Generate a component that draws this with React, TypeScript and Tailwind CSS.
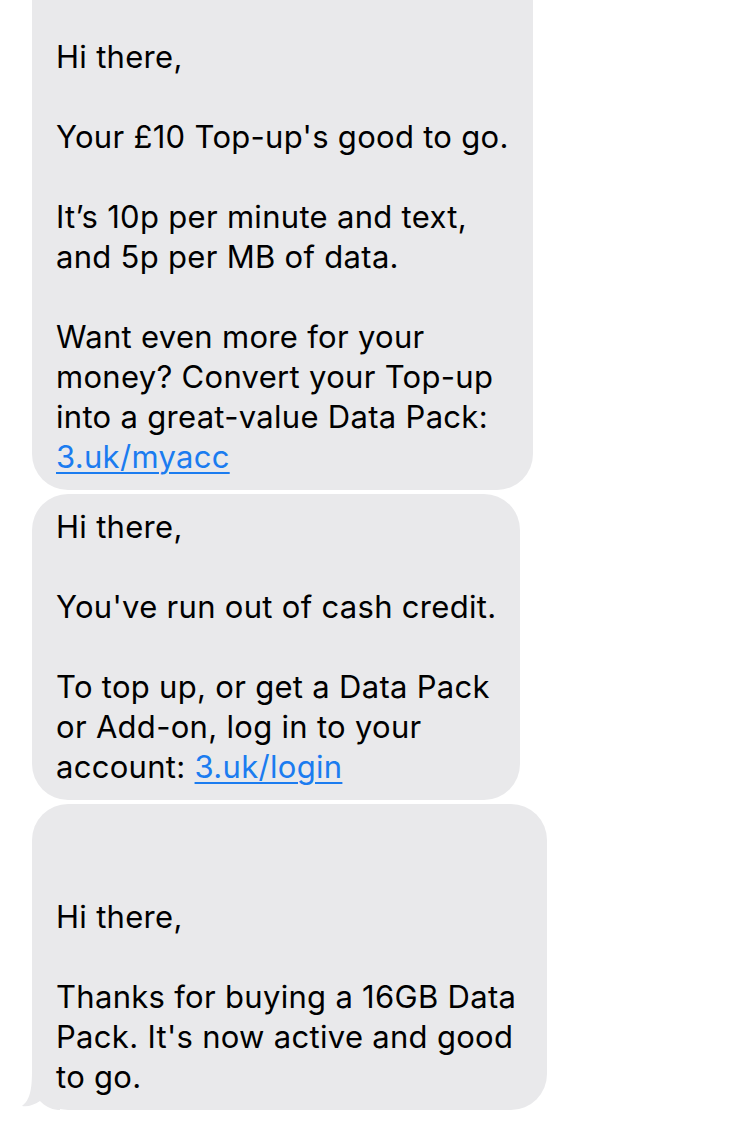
import React from "react";

const Line = ({ children }: { children?: React.ReactNode }) => (
  <div className="h-[40px] whitespace-nowrap leading-[40px]">{children ?? "\u00a0"}</div>
);

const Link = ({ children }: { children: React.ReactNode }) => (
  <span className="text-[#1b7cf0] underline decoration-[1.5px] underline-offset-[4px]">{children}</span>
);

export default function App() {
  return (
    <div
      className="min-h-[1122px] w-[738px] overflow-hidden bg-white text-[31px] tracking-[0.3px] text-black"
      style={{ fontFamily: "Inter, 'Liberation Sans', sans-serif" }}
    >
      <div className="ml-[32px] mt-[-56px] flex flex-col gap-[4px]">
        <div className="w-[501px] rounded-[36px] bg-[#e9e9eb] py-[13px] pl-[24px]">
          <Line />
          <Line />
          <Line>Hi there,</Line>
          <Line />
          <Line>Your £10 Top-up's good to go.</Line>
          <Line />
          <Line>It’s 10p per minute and text,</Line>
          <Line>and 5p per MB of data.</Line>
          <Line />
          <Line>Want even more for your</Line>
          <Line>money? Convert your Top-up</Line>
          <Line>into a great-value Data Pack:</Line>
          <Line>
            <Link>3.uk/myacc</Link>
          </Line>
        </div>
        <div className="w-[488px] rounded-[36px] bg-[#e9e9eb] py-[13px] pl-[24px]">
          <Line>Hi there,</Line>
          <Line />
          <Line>You've run out of cash credit.</Line>
          <Line />
          <Line>To top up, or get a Data Pack</Line>
          <Line>or Add-on, log in to your</Line>
          <Line>
            account: <Link>3.uk/login</Link>
          </Line>
        </div>
        <div className="relative w-[515px] rounded-[36px] bg-[#e9e9eb] py-[13px] pl-[24px]">
          <svg
            className="absolute bottom-0 left-[-12px]"
            width="40"
            height="40"
            viewBox="0 0 40 40"
          >
            <path
              d="M12 0 C12 20 10 30 2 36 C8 37 14 35 20 31 C25 36 30 39 38 40 L40 40 L40 0 Z"
              fill="#e9e9eb"
            />
          </svg>
          <div className="relative">
            <Line />
            <Line />
            <Line>Hi there,</Line>
            <Line />
            <Line>Thanks for buying a 16GB Data</Line>
            <Line>Pack. It's now active and good</Line>
            <Line>to go.</Line>
          </div>
        </div>
      </div>
    </div>
  );
}
